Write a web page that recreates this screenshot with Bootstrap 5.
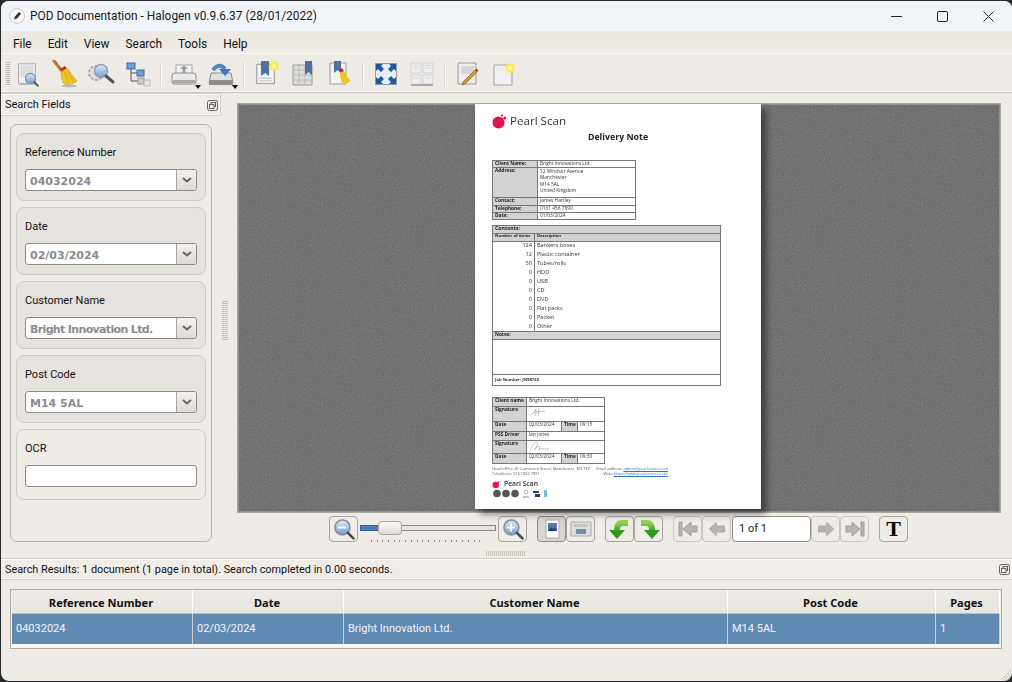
<!doctype html>
<html lang="en"><head><meta charset="utf-8"><title>POD Documentation</title>
<link href="https://cdn.jsdelivr.net/npm/bootstrap@5.3.0/dist/css/bootstrap.min.css" rel="stylesheet">
<style>
html,body{height:682px;overflow:hidden}
body{background:#2a2a2c;font-family:Roboto,"Noto Sans",sans-serif;font-size:11px;color:#111;line-height:1.2}
.win{margin:1px 0 1px 1px;height:680px;background:#efece8;border-radius:8px;overflow:hidden;position:relative;width:1011px}
.ttl{height:30px;flex:none;background:#f1f4f9;font-size:11.9px;color:#1b1b1b}
.ttl-ico{margin:0 5px 0 8px}
.capwrap{margin-right:1px}
.cap{width:46px;height:30px}
.mnu{height:23px;flex:none;background:linear-gradient(#ebe7e1,#efece7);border-bottom:1px solid #fbfaf8;padding:4px 0 0 4px;font-size:11.9px}
.mnu span{padding:0 8px}
.tools{height:39px;flex:none;border-bottom:1px solid #c9c6c0;background:#eeebe6;box-shadow:inset 0 -1px 0 #f8f7f5;padding-top:2px}
.grip{width:4px;height:24px;margin:0 0 0 5px;background:repeating-linear-gradient(#b9b6b0 0 1px,#efece8 1px 2px)}
.tb{width:36.6px;height:32px;position:relative;flex:none}
.tb svg{display:block}
.sepv{width:2px;height:25px;background:#dcd9d4;border-right:1px solid #fff;margin:0 3.7px}
.caret{position:absolute;right:1px;bottom:1px;border:3px solid transparent;border-top:4px solid #111;border-bottom:0}
.body-row{height:463px;flex:none}
.leftp{width:220px;flex:none}
.dock{height:23px;flex:none;border:1px solid #d2cfc9;border-left:0;background:#f0ede9;font-size:11px;padding:1px 2px 0 4px;box-shadow:inset 0 0 0 1px #fbfaf8}
.gp-outer{margin:8px 9px 0 9px;height:418px;border:1px solid #b5b2ac;border-radius:7px;padding:8px 5px}
.gp{height:68px;border:1px solid #cfccc7;border-radius:8px;background:#e6e3df;margin-bottom:6px;padding:12px 8px 0 8px;font-size:11px}
.gp-plain{height:71px;background:transparent}
.cb{height:22px;margin-top:10px;border:1px solid #8f8b86;border-radius:3px;background:#fff;font-family:"DejaVu Sans",sans-serif;font-weight:700;font-size:11px;color:#8b8b8b;padding-left:4px}
.cb>span{padding-top:3px}
.tight{letter-spacing:-.65px}
.cb-btn{width:20px;height:20px;background:linear-gradient(#f3f1ee,#dedbd6);border-left:1px solid #a9a6a1;border-radius:0 2px 2px 0}
.split{width:16px;flex:none}
.dots-v{width:6px;height:39px;margin:-8px 9px 0 0;background:repeating-linear-gradient(#c4c1bb 0 1px,#efece8 1px 2px)}
.viewer-col{width:764px;flex:none}
.stage{height:410px;flex:none;margin-top:10px;padding-right:2px;border:1px solid #a9a6a0;box-shadow:inset 0 0 0 1px #8f8f8f;background-color:#848484;background-image:url("data:image/svg+xml,%3Csvg xmlns='http://www.w3.org/2000/svg' width='200' height='200'%3E%3Cfilter id='n'%3E%3CfeTurbulence type='fractalNoise' baseFrequency='.9' numOctaves='2'/%3E%3CfeColorMatrix values='0 0 0 0 0 0 0 0 0 0 0 0 0 0 0 0 0 0 .28 0'/%3E%3C/filter%3E%3Crect width='200' height='200' filter='url(%23n)'/%3E%3C/svg%3E")}
.sheet{width:286px;height:405px;background:#fff;box-shadow:5px 5px 7px rgba(0,0,0,.45);position:relative;padding:9px 0 0 17px;color:#333;font-family:"Open Sans",sans-serif;font-size:4.8px;line-height:1;filter:blur(.25px)}
.plogo{height:16px;font-size:11.6px;color:#333;gap:3px;font-weight:500}
.ptitle{width:252px;text-align:center;font-size:8.8px;font-weight:700;color:#222;margin-top:2px;height:12px;line-height:12px}
.dt{border-collapse:collapse;table-layout:fixed}
.dt td{border:1px solid #777;padding:0 2px;vertical-align:top;overflow:hidden;white-space:nowrap}
.dt .h{background:#d2d2d2;font-weight:700;color:#222}
.t1{width:144px;margin-top:17px}
.t2{width:229px;margin-top:5px}
.t3{width:113px;margin-top:11px}
.nb{border-top:0!important;border-bottom:0!important;font-size:5.6px;vertical-align:middle!important}
.pfoot{font-size:3.9px;width:176px;margin-top:2px;line-height:5px;color:#555}
.lk{color:#2f72c9;text-decoration:underline}
.controls{height:38px;flex:none;padding-top:3px}
.qb{width:29px;height:26px;border:1px solid #a8a5a0;border-radius:4px;background:#efece8;padding:0;display:flex;align-items:center;justify-content:center}
.qb.on{background:#d9d6d1;border-color:#8f8c87}
.qb.off{border-color:#c9c6c1}
.gl{margin-left:10px}
.sld{width:138px;height:26px;position:relative;margin:0 1px}
.sld-tr{position:absolute;left:1px;right:1px;top:9px;height:6px;border:1px solid #8d8a85;background:#e6e3df}
.sld-fill{position:absolute;left:1px;width:20px;top:9px;height:6px;background:#4d7cb8;border:1px solid #2d5c94}
.sld-h{position:absolute;left:19px;top:5px;width:24px;height:14px;border:1px solid #a8a5a0;border-radius:4px;background:linear-gradient(#fbfaf8,#dedbd6)}
.sld-t{position:absolute;left:12px;right:12px;top:24px;height:2px;background:repeating-linear-gradient(90deg,#8a8a8a 0 1px,transparent 1px 5.7px)}
.pgbox{width:79px;height:26px;border:1px solid #928f8a;border-radius:4px;background:#fff;margin-left:1px;padding-left:6px;font-size:11px;line-height:24px;color:#222}
.dots-h{width:39px;height:5px;flex:none;margin:0 auto;transform:translateX(-114px);background:repeating-linear-gradient(90deg,#c4c1bb 0 1px,#efece8 1px 2px)}
.resbar{height:22px;flex:none;margin-top:2px;border-top:1px solid #d2cfc9;border-bottom:1px solid #d2cfc9;background:#f0ede9;font-size:10.85px;padding:0 2px 0 4px;box-shadow:inset 0 0 0 1px #fbfaf8}
.restbl{margin:9px 10px 0 9px;height:60px;flex:none;border:1px solid #b0ada7;padding:0 1px;background:linear-gradient(#efece8 54px,#f8f7f5 54px)}
.rgrid{display:grid;grid-template-columns:181px 151px 384px 208px 64px}
.rh{height:24px;border-right:1px solid #fff;text-align:center;font-family:"Noto Sans",sans-serif;font-weight:700;font-size:11.1px;color:#111;line-height:25px;background:linear-gradient(#efece8,#e8e5e1);border-bottom:1px solid #bdbab4;white-space:nowrap;overflow:hidden;padding-right:2px}
.rc{height:30px;background:#618ab3;color:#f3f6fa;line-height:30px;padding-left:4px;font-size:11px;border-right:1px solid #cfd3d6}
.rz{position:absolute;right:0;bottom:0}
</style></head><body>
<svg width="0" height="0" class="position-absolute">
<defs>
<linearGradient id="gb" x1="0" y1="0" x2="0" y2="1"><stop offset="0" stop-color="#dfe9f6"/><stop offset="1" stop-color="#6f9fd8"/></linearGradient>
<linearGradient id="gg" x1="0" y1="0" x2="0" y2="1"><stop offset="0" stop-color="#8fd14a"/><stop offset="1" stop-color="#2f9a22"/></linearGradient>
<radialGradient id="gy"><stop offset="0" stop-color="#fff8b0"/><stop offset=".6" stop-color="#f6ea50"/><stop offset="1" stop-color="#f6ea50" stop-opacity="0"/></radialGradient>
<symbol id="mag" viewBox="0 0 28 28"><circle cx="12" cy="12" r="9.5" fill="url(#gb)" stroke="#8a8f96" stroke-width="2"/><path d="M19 19l7 7" stroke="#4b4b4b" stroke-width="3.4" stroke-linecap="round"/></symbol>
<symbol id="paper" viewBox="0 0 26 28"><path d="M3 2h20v23H3z" fill="#f2f2f2" stroke="#a3a3a3"/><path d="M5 4h16v14H5z" fill="#dcdcdc"/><path d="M4 26h19" stroke="#bbb" stroke-width="2"/></symbol>
<symbol id="broom" viewBox="0 0 28 28"><path d="M3 1l8 10" stroke="#b07a30" stroke-width="3" stroke-linecap="round"/><path d="M9 9l5-3 2 3-5 3z" fill="#c9232d"/><path d="M10 12l6-4c4 5 6 9 10 13-5 4-10 4-13 3-2-4-3-8-3-12z" fill="#eec428" stroke="#c39a18" stroke-width=".6"/><path d="M14 12l3 11M17 11l5 10" stroke="#c39a18" stroke-width=".7"/><ellipse cx="18" cy="26" rx="8" ry="1.4" fill="#bdbab4"/></symbol>
<symbol id="bm" viewBox="0 0 26 28"><path d="M3 4h19v21H3z" fill="#f3f3f3" stroke="#8d8d8d"/><path d="M8 1h8v15l-4-3-4 3z" fill="#4f6f9f" stroke="#2f4f7f" stroke-width=".6"/><path d="M6 19h13M6 22h13" stroke="#bbb"/></symbol>
<symbol id="arr" viewBox="0 0 24 24"><path d="M2 12l9-9v5h11v8H11v5z" fill="#b7b4af" stroke="#a19e99"/></symbol>
<symbol id="rot" viewBox="0 0 22 22"><path d="M3 5h5q6 0 6 6v3" fill="none" stroke="url(#gg)" stroke-width="6"/><path d="M6 12h16l-8 9z" fill="#2f9a22"/></symbol>
</defs></svg>

<div class="win d-flex flex-column">
<div class="ttl d-flex align-items-center">
<svg class="ttl-ico" width="16" height="16" viewBox="0 0 16 16"><circle cx="8" cy="8" r="7.5" fill="#f7f7f7" stroke="#c8c8c8"/><path d="M5 11.5l1-3 4-4.5 2 1.8-4 4.6z" fill="#2e2e2e"/></svg>
<span>POD Documentation - Halogen v0.9.6.37 (28/01/2022)</span>
<div class="ms-auto d-flex capwrap">
<div class="cap d-flex align-items-center justify-content-center"><svg width="11" height="11"><path d="M0 5.5h11" stroke="#222"/></svg></div>
<div class="cap d-flex align-items-center justify-content-center"><svg width="11" height="11"><rect x=".5" y=".5" width="10" height="10" rx="1.5" fill="none" stroke="#222"/></svg></div>
<div class="cap d-flex align-items-center justify-content-center"><svg width="11" height="11"><path d="M.5.5l10 10M10.5.5l-10 10" stroke="#222"/></svg></div>
</div></div>

<div class="mnu d-flex align-items-center"><span>File</span><span>Edit</span><span>View</span><span>Search</span><span>Tools</span><span>Help</span></div>

<div class="tools d-flex align-items-center">
<div class="grip"></div>
<div class="tb d-flex align-items-center justify-content-center"><svg width="24" height="26"><use href="#paper" width="22" height="24" y="1"/><use href="#mag" x="8" y="11" width="15" height="15"/></svg></div>
<div class="tb d-flex align-items-center justify-content-center"><svg width="28" height="28"><use href="#broom" width="28" height="28"/></svg></div>
<div class="tb d-flex align-items-center justify-content-center"><svg width="28" height="26" viewBox="0 0 28 26"><circle cx="9" cy="12" r="7" fill="#dedede" stroke="#aaa" stroke-width="2" stroke-dasharray="3 1.5"/><circle cx="14" cy="10" r="6.5" fill="url(#gb)" stroke="#9a9fa6" stroke-width="1.6"/><path d="M19 15l7 6" stroke="#555" stroke-width="3" stroke-linecap="round"/></svg></div>
<div class="tb d-flex align-items-center justify-content-center"><svg width="26" height="26" viewBox="0 0 26 26"><path d="M6 7v13h8M6 12h8" fill="none" stroke="#555"/><rect x="2" y="2" width="8" height="6" fill="#6e9fd6" stroke="#3f6fa6"/><rect x="12" y="9" width="7" height="6" fill="#6e9fd6" stroke="#3f6fa6"/><rect x="13" y="17" width="6" height="6" fill="#ccc" stroke="#999"/><rect x="19" y="19" width="6" height="6" fill="#e4e4e4" stroke="#bbb"/></svg></div>
<div class="sepv"></div>
<div class="tb d-flex align-items-center justify-content-center"><svg width="26" height="26" viewBox="0 0 26 26"><path d="M5 4h16v9H5z" fill="#f3f3f3" stroke="#aaa"/><path d="M13 4l4 4h-2.500v4h-3V8H9z" fill="#9aa0a6"/><path d="M1 15q0-3 3-3h18q3 0 3 3v6q0 2-2 2H3q-2 0-2-2z" fill="#e9e9e9" stroke="#8d8d8d"/><path d="M2 19h22v3H2z" fill="#a9a9a9"/></svg><span class="caret"></span></div>
<div class="tb d-flex align-items-center justify-content-center"><svg width="28" height="26" viewBox="0 0 28 26"><path d="M4 12L2 22h24l-2-10z" fill="#dfdfdf" stroke="#8d8d8d"/><path d="M2 19h24v5H2z" fill="#8d8d8d"/><path d="M6 9Q12 1 18 8" fill="none" stroke="#4d86c9" stroke-width="4"/><path d="M12 8h12l-6 7z" fill="#3f78bb"/></svg><span class="caret"></span></div>
<div class="sepv"></div>
<div class="tb d-flex align-items-center justify-content-center"><svg width="26" height="28" viewBox="0 0 26 28"><use href="#bm" width="24" height="27"/><circle cx="20" cy="6" r="6" fill="url(#gy)"/></svg></div>
<div class="tb d-flex align-items-center justify-content-center"><svg width="26" height="28" viewBox="0 0 26 28"><path d="M3 5h19v20H3z" fill="#dcdcdc" stroke="#9a9a9a"/><path d="M3 10h19M3 15h19M3 20h19M9 5v20M15 5v20" stroke="#b9b9b9"/><path d="M15 1h7v14l-3.500-3-3.500 3z" fill="#4f6f9f"/></svg></div>
<div class="tb d-flex align-items-center justify-content-center"><svg width="26" height="28" viewBox="0 0 26 28"><path d="M3 3h16v21H3z" fill="#f3f3f3" stroke="#9a9a9a"/><path d="M7 1h7v12l-3.500-3L7 13z" fill="#4f6f9f"/><path d="M12 10l3-2 2 3-3 2z" fill="#c9232d"/><path d="M13 13l4-2c2 4 4 7 7 10-3 2-6 3-9 2-1-3-2-6-2-10z" fill="#eec428"/></svg></div>
<div class="sepv"></div>
<div class="tb d-flex align-items-center justify-content-center"><svg width="22" height="22" viewBox="0 0 22 22"><rect x=".5" y=".5" width="21" height="21" fill="#e9eff5" stroke="#8d9aa8"/><path d="M1 1h7L6 3l3 3-3 3-3-3-2 2zM21 1v7l-2-2-3 3-3-3 3-3-2-2zM1 21v-7l2 2 3-3 3 3-3 3 2 2zM21 21h-7l2-2-3-3 3-3 3 3 2-2z" fill="#1e5aa0"/></svg></div>
<div class="tb d-flex align-items-center justify-content-center"><svg width="24" height="24" viewBox="0 0 24 24"><path d="M1 1h10v10H1zM13 1h10v10H13zM1 13h10v9H1zM13 13h10v9H13z" fill="#eee" stroke="#d4d4d4"/><path d="M3 3.500h6M3 6h6M15 3.500h6M15 6h6M3 16h6M15 16h6" stroke="#d8d8d8"/><path d="M1 23h22" stroke="#aaa" stroke-width="2"/></svg></div>
<div class="sepv"></div>
<div class="tb d-flex align-items-center justify-content-center"><svg width="22" height="24" viewBox="0 0 22 24"><path d="M1 1h18v21H1z" fill="#ececec" stroke="#9a9a9a"/><path d="M4 4h13v8H4z" fill="#d6d6d6"/><path d="M6 20L18 8l2 2L8 22l-3 1z" fill="#d9962b" stroke="#7d5314" stroke-width=".6"/><path d="M18 8l2 2 1.500-1.500-2-2z" fill="#d3232d"/></svg></div>
<div class="tb d-flex align-items-center justify-content-center"><svg width="24" height="24" viewBox="0 0 24 24"><path d="M1 3h18v20H1z" fill="#f0f0f0" stroke="#a3a3a3"/><circle cx="17" cy="6" r="6" fill="url(#gy)"/></svg></div>
</div>

<div class="body-row d-flex">
<div class="leftp d-flex flex-column">
<div class="dock d-flex align-items-center"><span>Search Fields</span><svg class="ms-auto" width="11" height="11" viewBox="0 0 11 11"><rect x=".5" y=".5" width="10" height="10" rx="2" fill="none" stroke="#666"/><rect x="4" y="2.500" width="4.500" height="4" fill="none" stroke="#666"/><rect x="2.500" y="4.500" width="4.500" height="4" fill="#efece8" stroke="#666"/></svg></div>
<div class="gp-outer">
<div class="gp">Reference Number<div class="cb d-flex align-items-center justify-content-between"><span>04032024</span><div class="cb-btn d-flex align-items-center justify-content-center"><svg width="10" height="6"><path d="M1 1l4 3.500L9 1" fill="none" stroke="#666" stroke-width="2"/></svg></div></div></div>
<div class="gp">Date<div class="cb d-flex align-items-center justify-content-between"><span>02/03/2024</span><div class="cb-btn d-flex align-items-center justify-content-center"><svg width="10" height="6"><path d="M1 1l4 3.500L9 1" fill="none" stroke="#666" stroke-width="2"/></svg></div></div></div>
<div class="gp">Customer Name<div class="cb d-flex align-items-center justify-content-between"><span class="tight">Bright Innovation Ltd.</span><div class="cb-btn d-flex align-items-center justify-content-center"><svg width="10" height="6"><path d="M1 1l4 3.500L9 1" fill="none" stroke="#666" stroke-width="2"/></svg></div></div></div>
<div class="gp">Post Code<div class="cb d-flex align-items-center justify-content-between"><span>M14 5AL</span><div class="cb-btn d-flex align-items-center justify-content-center"><svg width="10" height="6"><path d="M1 1l4 3.500L9 1" fill="none" stroke="#666" stroke-width="2"/></svg></div></div></div>
<div class="gp gp-plain">OCR<div class="cb"></div></div>
</div></div>

<div class="split d-flex align-items-center justify-content-center"><div class="dots-v"></div></div>

<div class="viewer-col d-flex flex-column">
<div class="stage d-flex justify-content-center">
<div class="sheet">
<div class="plogo d-flex align-items-center"><svg width="15" height="15" viewBox="0 0 15 15"><circle cx="6.500" cy="8.500" r="6" fill="#e0144c"/><circle cx="12.800" cy="4" r="1.500" fill="#e0144c"/><circle cx="10" cy="1.600" r="1.100" fill="#e0144c"/></svg><span>Pearl Scan</span></div>
<div class="ptitle">Delivery Note</div>
<table class="dt t1"><colgroup><col style="width:45px"><col></colgroup>
<tr style="height:7px"><td class="h">Client Name:</td><td>Bright Innovations Ltd.</td></tr>
<tr style="height:30px"><td class="h">Address:</td><td style="line-height:6.400px">12 Windsor Avenue<br>Manchester<br>M14 5AL<br>United Kingdom</td></tr>
<tr style="height:8px"><td class="h">Contact:</td><td>James Hartley</td></tr>
<tr style="height:7px"><td class="h">Telephone:</td><td>0161 456 7890</td></tr>
<tr style="height:7px"><td class="h">Date:</td><td>01/03/2024</td></tr>
</table>
<table class="dt t2"><colgroup><col style="width:42px"><col></colgroup>
<tr style="height:8px"><td class="h" colspan="2" style="font-size:5.200px">Contents:</td></tr>
<tr style="height:8px"><td class="h" style="font-size:4.200px">Number of items</td><td class="h" style="font-size:4.200px">Description</td></tr>
<tr style="height:9px"><td class="nb text-end">124</td><td class="nb">Bankers boxes</td></tr>
<tr style="height:9px"><td class="nb text-end">12</td><td class="nb">Plastic container</td></tr>
<tr style="height:9px"><td class="nb text-end">30</td><td class="nb">Tubes/rolls</td></tr>
<tr style="height:9px"><td class="nb text-end">0</td><td class="nb">HDD</td></tr>
<tr style="height:9px"><td class="nb text-end">0</td><td class="nb">USB</td></tr>
<tr style="height:9px"><td class="nb text-end">0</td><td class="nb">CD</td></tr>
<tr style="height:9px"><td class="nb text-end">0</td><td class="nb">DVD</td></tr>
<tr style="height:9px"><td class="nb text-end">0</td><td class="nb">Flat packs</td></tr>
<tr style="height:9px"><td class="nb text-end">0</td><td class="nb">Packet</td></tr>
<tr style="height:9px"><td class="nb text-end">0</td><td class="nb">Other</td></tr>
<tr style="height:8px"><td class="h" colspan="2">Notes:</td></tr>
<tr style="height:35px"><td colspan="2"></td></tr>
<tr style="height:11px"><td colspan="2" style="font-weight:700;vertical-align:middle;font-size:4.200px">Job Number: JN98765</td></tr>
</table>
<table class="dt t3"><colgroup><col style="width:34px"><col style="width:35px"><col style="width:16px"><col></colgroup>
<tr style="height:9px"><td class="h">Client name</td><td colspan="3">Bright Innovations Ltd.</td></tr>
<tr style="height:15px"><td class="h">Signature</td><td colspan="3"><svg width="20" height="10" viewBox="0 0 20 10"><path d="M1 8Q6 7 7 2q0 4-1 7M10 1L9 9M7 5q6-1 9-1" fill="none" stroke="#666" stroke-width=".4"/></svg></td></tr>
<tr style="height:10px"><td class="h">Date</td><td>02/03/2024</td><td class="h">Time</td><td>09:15</td></tr>
<tr style="height:9px"><td class="h">PSS Driver</td><td colspan="3">Ian Jones</td></tr>
<tr style="height:13px"><td class="h">Signature</td><td colspan="3"><svg width="22" height="10" viewBox="0 0 22 10"><path d="M1 9Q5 1 8 1q2 2-3 8 4-5 6-3l-1 3q3-3 4-1h6" fill="none" stroke="#777" stroke-width=".4"/></svg></td></tr>
<tr style="height:10px"><td class="h">Date</td><td>02/03/2024</td><td class="h">Time</td><td>09:30</td></tr>
</table>
<div class="d-flex pfoot justify-content-between"><div>Head office: 41 Carnarvon Street, Manchester, M3 1EZ<br>Telephone: 0161 832 7991</div><div class="text-end">Email address: <span class="lk">admin@pearl-scan.co.uk</span><br>Web: <span class="lk">https://www.pearl-scan.co.uk/</span></div></div>
<div class="d-flex align-items-center gap-1 mt-1" style="font-size:6.800px;font-weight:600"><svg width="8" height="9" viewBox="0 0 15 15"><circle cx="7" cy="8.500" r="6" fill="#e0144c"/><circle cx="12.500" cy="3" r="1.700" fill="#e0144c"/></svg>Pearl Scan</div>
<svg width="56" height="9" viewBox="0 0 56 9"><circle cx="5" cy="4.500" r="3.800" fill="#555"/><circle cx="14" cy="4.500" r="3.800" fill="#555"/><circle cx="23" cy="4.500" r="3.800" fill="#555"/><circle cx="34" cy="3" r="2" fill="none" stroke="#7aa" stroke-width=".7"/><path d="M31 8h6" stroke="#789"/><path d="M41 2h6v2h-6zM43 5h5v3h-5z" fill="#246"/><rect x="52" y="1" width="3" height="7" fill="#7bd"/></svg>
</div>
</div>

<div class="controls d-flex">
<div class="d-flex" style="margin-left:92px">
<button class="qb"><svg width="22" height="22"><use href="#mag" width="22" height="22"/><path d="M5 9.500h8" stroke="#fff" stroke-width="2"/></svg></button>
<div class="sld"><div class="sld-tr"></div><div class="sld-fill"></div><div class="sld-h"></div><div class="sld-t"></div></div>
<button class="qb"><svg width="22" height="22"><use href="#mag" width="22" height="22"/><path d="M5 9.500h8M9 5.500v8" stroke="#fff" stroke-width="2"/></svg></button>
</div>
<div class="d-flex gl">
<button class="qb on"><svg width="20" height="20"><path d="M4 1h13v18H4z" fill="#fff" stroke="#aaa"/><path d="M6 4h9v8H6z" fill="#5877a8"/><path d="M6 12l3-4 2 2 2-2 2 4z" fill="#24406f"/></svg></button>
<button class="qb"><svg width="22" height="18"><path d="M1 2h20v14H1z" fill="#dedede" stroke="#aaa"/><path d="M4 4h14v3H4z" fill="#c4c4c4"/><path d="M6 9h10v5H6z" fill="#6f8fb8"/></svg></button>
</div>
<div class="d-flex gl">
<button class="qb"><svg width="22" height="22" style="transform:scaleX(-1)"><use href="#rot" width="22" height="22"/></svg></button>
<button class="qb"><svg width="22" height="22"><use href="#rot" width="22" height="22"/></svg></button>
</div>
<div class="d-flex gl">
<button class="qb off"><svg width="20" height="18" viewBox="0 0 20 18"><path d="M1 2h3v14H1zM5 9l8-7v4h6v6h-6v4z" fill="#b7b4af" stroke="#a19e99"/></svg></button>
<button class="qb off"><svg width="18" height="18"><use href="#arr" width="18" height="18"/></svg></button>
<div class="pgbox">1 of 1</div>
<button class="qb off"><svg width="18" height="18" style="transform:scaleX(-1)"><use href="#arr" width="18" height="18"/></svg></button>
<button class="qb off"><svg width="20" height="18" viewBox="0 0 20 18" style="transform:scaleX(-1)"><path d="M1 2h3v14H1zM5 9l8-7v4h6v6h-6v4z" fill="#b7b4af" stroke="#a19e99"/></svg></button>
</div>
<button class="qb gl"><span style="font:700 22px/1 'Liberation Serif',serif;color:#000">T</span></button>
</div>
<div class="dots-h"></div>
</div>
</div>

<div class="resbar d-flex align-items-center"><span>Search Results: 1 document (1 page in total). Search completed in 0.00 seconds.</span><svg class="ms-auto" width="11" height="11" viewBox="0 0 11 11"><rect x=".5" y=".5" width="10" height="10" rx="2" fill="none" stroke="#666"/><rect x="4" y="2.500" width="4.500" height="4" fill="none" stroke="#666"/><rect x="2.500" y="4.500" width="4.500" height="4" fill="#efece8" stroke="#666"/></svg></div>

<div class="restbl"><div class="rgrid">
<div class="rh">Reference Number</div><div class="rh">Date</div><div class="rh">Customer Name</div><div class="rh">Post Code</div><div class="rh">Pages</div>
<div class="rc">04032024</div><div class="rc">02/03/2024</div><div class="rc">Bright Innovation Ltd.</div><div class="rc">M14 5AL</div><div class="rc">1</div>
</div></div>
<svg class="rz" width="13" height="13"><path d="M12 2L2 12M12 5L5 12M12 8L8 12M12 11L11 12" stroke="#c4c1bb"/></svg>
</div>
<script src="https://cdn.jsdelivr.net/npm/bootstrap@5.3.0/dist/js/bootstrap.bundle.min.js"></script>
</body></html>
